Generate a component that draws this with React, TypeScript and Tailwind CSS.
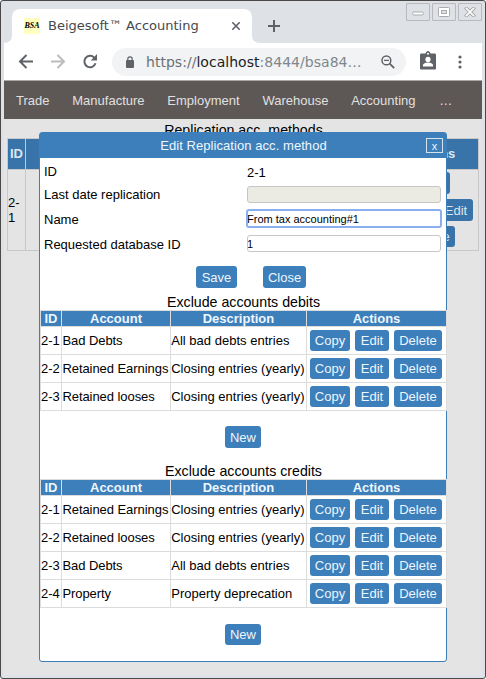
import React from "react";

const btn =
  "flex items-center justify-center rounded-[3px] bg-[#3c7fba] text-[13px] leading-[15px] text-[#eef6ff]";

type Row = [string, string, string];

const debits: Row[] = [
  ["2-1", "Bad Debts", "All bad debts entries"],
  ["2-2", "Retained Earnings", "Closing entries (yearly)"],
  ["2-3", "Retained looses", "Closing entries (yearly)"],
];

const credits: Row[] = [
  ["2-1", "Retained Earnings", "Closing entries (yearly)"],
  ["2-2", "Retained looses", "Closing entries (yearly)"],
  ["2-3", "Bad Debts", "All bad debts entries"],
  ["2-4", "Property", "Property deprecation"],
];

const cellStyles = ["", "pl-[0.4px] tracking-[-0.06px]", "pl-[0.2px] tracking-[0.02px]"];

function EntryTable({ title, rows }: { title: string; rows: Row[] }) {
  const cols = "grid grid-cols-[21px_109px_136px_140px]";
  return (
    <section>
      <h2 className="h-4 whitespace-nowrap pl-px text-center text-[14.2px] leading-4">{title}</h2>
      <div className="-mr-px border-l border-t border-[#dcdcdc]">
        <div className={cols + " h-4 bg-[#3c7fba] text-center text-[13px] font-bold leading-[15px] text-[#eef6ff]"}>
          {["ID", "Account", "Description", "Actions"].map((h) => (
            <div key={h} className="border-b border-r border-[#dcdcdc]">{h}</div>
          ))}
        </div>
        {rows.map((r) => (
          <div key={r[0]} className={cols + " h-7 whitespace-nowrap text-[13px] leading-[28px]"}>
            {r.map((c, i) => (
              <div key={i} className={"h-7 border-b border-r border-[#dcdcdc] " + cellStyles[i]}>{c}</div>
            ))}
            <div className="flex h-7 items-start gap-[5px] border-b border-r border-[#dcdcdc] pl-[3px] pt-[3px]">
              <button className={btn + " h-[21px] w-10"}>Copy</button>
              <button className={btn + " h-[21px] w-[34px]"}>Edit</button>
              <button className={btn + " h-[21px] w-12"}>Delete</button>
            </div>
          </div>
        ))}
      </div>
    </section>
  );
}

function Dialog() {
  return (
    <div className="absolute left-[39px] top-[132px] h-[530px] w-[408px] rounded-[3px] border border-[#3c7fba] bg-white text-[13px] text-black">
      <header className="relative h-[25px] bg-[#3c7fba] pl-px text-center leading-[25px] tracking-[0.06px] text-[#eef6ff]">
        Edit Replication acc. method
        <button className="absolute right-[3px] top-[5px] h-[15px] w-[17px] border border-[#d5e3ef] text-[11px] leading-[14px]">x</button>
      </header>
      <div className="grid grid-cols-[203px_194px] grid-rows-[25px_24px_25px_26px] items-center pl-1">
        <label className="leading-[25px] pt-px">ID</label>
        <div className="pt-[4px]">2-1</div>
        <label>Last date replication</label>
        <div className="-mt-[2px] h-[17px] w-[194px] rounded-[3px] border border-[#c6c6c6] bg-[#ebebe4]" />
        <label>Name</label>
        <input defaultValue="From tax accounting#1" className="-ml-px -mt-[2px] h-[19px] w-[196px] rounded-[3px] border-2 border-[#8aaff0] bg-white p-0 text-[11px] -indent-px outline-none" />
        <label>Requested database ID</label>
        <input defaultValue="1" className="-mt-[3px] h-[17px] w-[194px] rounded-[3px] border border-[#c6c6c6] bg-white p-0 text-[11px] -indent-px outline-none" />
      </div>
      <div className="flex h-[36px] gap-[26px] pl-[156px] pt-[8px]">
        <button className={btn + " h-[22px] w-[41px]"}>Save</button>
        <button className={btn + " h-[22px] w-[43px]"}>Close</button>
      </div>
      <EntryTable title="Exclude accounts debits" rows={debits} />
      <div className="flex h-[52px] justify-center pt-[15px]">
        <button className={btn + " h-[22px] w-9"}>New</button>
      </div>
      <EntryTable title="Exclude accounts credits" rows={credits} />
      <div className="flex justify-center pt-4">
        <button className={btn + " h-[21px] w-9"}>New</button>
      </div>
    </div>
  );
}

function WindowButton({ children }: { children: React.ReactNode }) {
  return (
    <div className="flex h-[18px] w-6 items-center justify-center rounded-[1px] border border-[#b9b8be]">
      <svg width="12" height="10" viewBox="0 0 12 10" fill="none">{children}</svg>
    </div>
  );
}

function Browser() {
  return (
    <>
      <div className="flex h-[34px] items-stretch pl-[8px]">
        <div className="relative flex w-[240px] items-center rounded-t-lg bg-white pl-3 pr-3">
          <svg className="absolute -left-2 bottom-0" width="8" height="8"><path d="M8 0v8H0q8 0 8-8" fill="white" /></svg>
          <svg className="absolute -right-2 bottom-0" width="8" height="8"><path d="M0 0v8h8q-8 0-8-8" fill="white" /></svg>
          <div className="flex h-4 w-4 items-center justify-center bg-[#ffffc0] font-['Liberation_Serif',serif] text-[8px] font-bold italic leading-none text-black">BSA</div>
          <span className="ml-2 whitespace-nowrap font-['DejaVu_Sans',sans-serif] text-[13px] leading-4 text-[#45494d]">Beigesoft™ Accounting</span>
          <svg className="ml-auto mr-[-1px]" width="10" height="10" viewBox="0 0 10 10"><path d="M1.3 1.3l7.4 7.4M8.7 1.3L1.3 8.7" stroke="#5f6368" strokeWidth="1.6" /></svg>
        </div>
        <svg className="ml-4 mt-[11px]" width="12" height="12"><path d="M6 0v12M0 6h12" stroke="#5f6368" strokeWidth="2" /></svg>
      </div>
      <div className="flex h-[37px] bg-white">
        <svg className="ml-[14px] mt-[11px]" width="16" height="15" viewBox="0 0 16 15" fill="none" stroke="#5f6368" strokeWidth="2"><path d="M15 7.5H2.5M8.5 1L2 7.5 8.5 14" /></svg>
        <svg className="ml-4 mt-[11px]" width="16" height="15" viewBox="0 0 16 15" fill="none" stroke="#babcbe" strokeWidth="2"><path d="M1 7.5h12.5M7.5 1L14 7.5 7.5 14" /></svg>
        <svg className="ml-4 mt-[11px]" width="16" height="15" viewBox="0 0 16 15"><path d="M13.5 9.3A5.7 5.7 0 1 1 12.2 3.6" fill="none" stroke="#5f6368" strokeWidth="2" /><path d="M15 0v6.4H8.8z" fill="#5f6368" /></svg>
        <div className="ml-[14px] mt-[5px] flex h-7 w-[294px] items-center rounded-full bg-[#f1f3f4] pl-[14px]">
          <svg width="8" height="12" viewBox="0 0 8 12"><rect y="4" width="8" height="8" rx="1" fill="#5f6368" /><path d="M1.8 4.5V3a2.2 2.2 0 0 1 4.4 0v1.5" fill="none" stroke="#5f6368" strokeWidth="1.2" /></svg>
          <span className="ml-3 w-[219px] whitespace-nowrap font-['DejaVu_Sans',sans-serif] text-[14px] leading-5 tracking-[0.03px] text-[#80868b]"><span className="text-[#6b7074]">https://</span><span className="text-[#202124]">localhost</span>:8444/bsa84…</span>
          <svg className="ml-[16px]" width="14" height="14" viewBox="0 0 14 14" fill="none" stroke="#5f6368"><circle cx="5.4" cy="5.4" r="4.4" strokeWidth="1.5" /><path d="M3 5.4h5" strokeWidth="1.1" /><path d="M8.7 8.7l4.5 4.5" strokeWidth="1.8" /></svg>
        </div>
        <svg className="ml-[14px] mt-[8px]" width="16" height="19" viewBox="0 0 16 19"><rect y="2.5" width="16" height="16" rx="1.3" fill="#5f6368" /><circle cx="8" cy="2.6" r="2" fill="#5f6368" stroke="#5f6368" /><circle cx="8" cy="2.8" r="1" fill="white" /><circle cx="8" cy="8.4" r="2.6" fill="white" /><path d="M3 15.5v-1.2c0-2 3.2-2.8 5-2.8s5 .8 5 2.8v1.2z" fill="white" /></svg>
        <svg className="ml-[22px] mt-[12px]" width="4" height="14" fill="#5f6368"><circle cx="2" cy="2" r="1.6" /><circle cx="2" cy="7" r="1.6" /><circle cx="2" cy="12" r="1.6" /></svg>
      </div>
    </>
  );
}

export default function App() {
  return (
    <div className="relative h-[679px] w-[486px] overflow-hidden rounded-[3px] border border-[#4b4849] bg-[#dee1e6] px-[3px] pt-2 font-['Liberation_Sans',Arial,sans-serif]">
      <Browser />
      <nav className="flex h-[39px] items-center gap-[22.8px] whitespace-nowrap border-t border-[#aaa7a8] bg-[#5d5755] pl-3 pt-px text-[13px] text-[#e0e0e0]">
        <span>Trade</span><span>Manufacture</span><span>Employment</span><span>Warehouse</span><span>Accounting</span><span className="ml-px">…</span>
      </nav>
      <main className="h-[556px] w-[478px] bg-[#e4e4e4] px-[3px] pt-[3px] text-[13px] text-black">
        <h1 className="h-4 pl-px text-center text-[14.2px] leading-[17px]">Replication acc. methods</h1>
        <div className="grid h-[113px] w-[472px] grid-cols-[18px_358px_95px] grid-rows-[31px_81px] border-l border-t border-[#c8c8c8] [&>div]:border-b [&>div]:border-r [&>div]:border-[#c8c8c8]">
          <div className="bg-[#3874aa] text-center font-bold leading-[30px] text-[#dce6ef]">ID</div>
          <div className="bg-[#3874aa]" />
          <div className="bg-[#3874aa] pl-px text-center font-bold leading-[30px] text-[#dce6ef]">Actions</div>
          <div className="flex items-center leading-[15px]">2-<br />1</div>
          <div />
          <div className="flex flex-col gap-[5px] pt-[2px] text-[#dce6ef]">
            <button className="ml-[26px] h-[22px] w-10 rounded-[3px] bg-[#3874aa]" />
            <button className="ml-[55px] h-[22px] w-[34px] rounded-[3px] bg-[#3874aa] leading-[21px]">Edit</button>
            <button className="ml-[23px] h-[21px] w-12 rounded-[3px] bg-[#3874aa] leading-[20px]">Delete</button>
          </div>
        </div>
      </main>
      <div className="absolute right-[3px] top-[2px] flex gap-[2px]">
        <WindowButton><rect x="0.5" y="5" width="11" height="3" rx="1.5" stroke="#aaabae" fill="white" /></WindowButton>
        <WindowButton><rect x="0.5" y="0.5" width="11" height="9" rx="1" stroke="#aaabae" fill="white" /><rect x="3.5" y="3.5" width="5" height="3" stroke="#aaabae" fill="#dee1e6" /></WindowButton>
        <WindowButton><path d="M2.5 1.5l7 7M9.5 1.5l-7 7" stroke="#a3a4a7" strokeWidth="3.4" strokeLinecap="square" /><path d="M2.5 1.5l7 7M9.5 1.5l-7 7" stroke="white" strokeWidth="1.7" strokeLinecap="square" /></WindowButton>
      </div>
      <div className="absolute -left-px -top-px"><Dialog /></div>
    </div>
  );
}
